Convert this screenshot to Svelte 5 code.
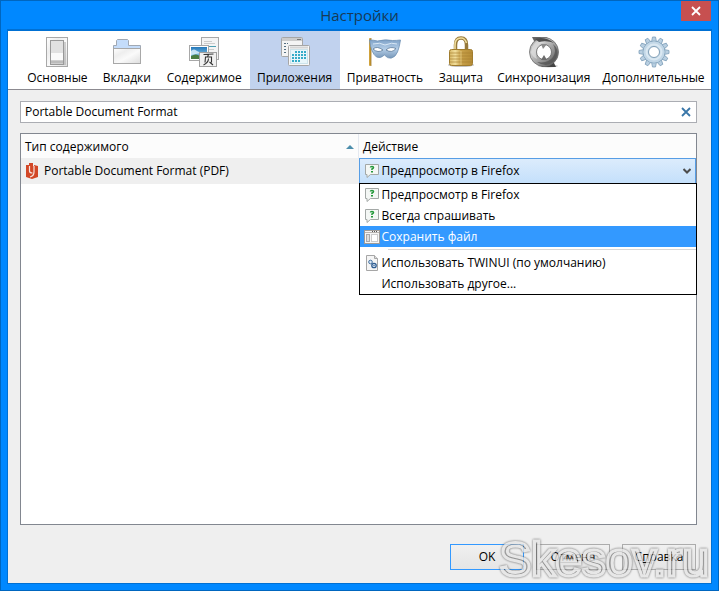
<script lang="ts">
  type Tab = { id: string; label: string };
  type Action = { id: string; label: string; icon: string };

  const tabs: Tab[] = [
    { id: 'general', label: 'Основные' },
    { id: 'tabs', label: 'Вкладки' },
    { id: 'content', label: 'Содержимое' },
    { id: 'apps', label: 'Приложения' },
    { id: 'privacy', label: 'Приватность' },
    { id: 'security', label: 'Защита' },
    { id: 'sync', label: 'Синхронизация' },
    { id: 'advanced', label: 'Дополнительные' }
  ];

  const actions: Action[] = [
    { id: 'preview', label: 'Предпросмотр в Firefox', icon: 'ask' },
    { id: 'ask', label: 'Всегда спрашивать', icon: 'ask' },
    { id: 'save', label: 'Сохранить файл', icon: 'save' },
    { id: 'twinui', label: 'Использовать TWINUI (по умолчанию)', icon: 'app' },
    { id: 'other', label: 'Использовать другое...', icon: '' }
  ];

  const teeth = Array.from({ length: 12 }, (_, i) => i * 30);

  let activeTab = $state('apps');
  let query = $state('Portable Document Format');
  let hovered = $state('save');
</script>

{#snippet actionIcon(name: string)}
  <svg class="action-icon" viewBox="0 0 16 16" aria-hidden="true">
    {#if name === 'ask'}
      <path d="M1.5 1.500h13v10h-8l-3.500 3v-3h-1.500z" fill="#f4f7f5" stroke="#a3a8a6" />
      <path d="M6.500 4.500q0-1 1.500-1t1.500 1q0 1-1.500 1.500v1" fill="none" stroke="#23983a" stroke-width="1.600" />
      <rect x="7" y="8" width="2" height="1.500" fill="#23983a" />
    {:else if name === 'save'}
      <rect x="0.500" y="1.500" width="15" height="13" fill="#f5f5f5" stroke="#a09c98" />
      <path d="M1 3.500h14" stroke="#b8b4b0" />
      <path d="M8 2.500h1M10 2.500h1M12 2.500h1" stroke="#555" />
      <rect x="2.500" y="5.500" width="3" height="7" fill="#ddd" stroke="#aaa" />
      <rect x="7.500" y="5.500" width="6" height="7" fill="#fff" stroke="#ccc" />
    {:else if name === 'app'}
      <path d="M2.500.5h8l3 3v12h-11z" fill="#f5f5f5" stroke="#a6a6a6" />
      <path d="M10.500.5v3h3" fill="#ddd" stroke="#a6a6a6" />
      <circle cx="6.500" cy="7" r="1.800" fill="#dce9f7" stroke="#42709f" />
      <circle cx="10" cy="10.500" r="2.200" fill="#dce9f7" stroke="#2f5d91" stroke-width="1.300" />
      <circle cx="10" cy="10.500" r=".7" fill="#2f5d91" />
    {/if}
  </svg>
{/snippet}

{#snippet tabIcon(id: string)}
  <svg class="tab-icon" viewBox="0 0 32 32" aria-hidden="true">
    {#if id === 'general'}
      <rect x="5.500" y="1.500" width="21" height="29" fill="url(#paper)" stroke="#a8a8a8" />
      <path d="M11 28h13V6" fill="none" stroke="#999" stroke-width="2" opacity=".45" />
      <rect x="9.500" y="4.500" width="13" height="24" fill="#e1e1e1" stroke="#999" />
      <rect x="10" y="17" width="12" height="7" fill="#fafafa" />
      <path d="M10 26h12" stroke="#bbb" stroke-width="3" />
    {:else if id === 'tabs'}
      <path d="M2.500 12V9.500h3v-5l1-1h10l1 1v5h12V12" fill="#c4dcfa" stroke="#a1a9b4" />
      <rect x="2.500" y="12.500" width="27" height="15" fill="url(#paper)" stroke="#a8a8a8" />
    {:else if id === 'content'}
      <rect x="13.500" y="1.500" width="17" height="22" fill="#f4f4f4" stroke="#a8a8a8" />
      <path d="M16 5.500h8M16 7.500h11M16 13.500h10" stroke="#ccc" />
      <path d="M16 10.500h12" stroke="#4f9fb2" />
      <rect x="1.500" y="9.500" width="19" height="15" fill="#fff" stroke="#a8a8a8" />
      <rect x="3" y="11" width="16" height="12" fill="url(#sky)" />
      <path d="M3 15q3-3 6 0l4 2-10 2z" fill="#e2f2fc" opacity=".8" />
      <path d="M3 20q5-3 9 0v3H3z" fill="#4a7b40" />
      <rect x="11.500" y="16.500" width="17" height="14" fill="#f1f1f1" stroke="#a0a0a0" />
      <path d="M15.500 18.500l10-.5M20.500 18.500l-1 2.500M17 26.500l.5-5.500h6v5.500M20.500 22.500q0 4-5 6.500M21.500 26l3.500 3" fill="none" stroke="#333" stroke-width="1.100" />
    {:else if id === 'apps'}
      <rect x="2.500" y="1.500" width="21" height="19" rx="1" fill="#f4f4f4" stroke="#a6a6a6" />
      <path d="M3 3.500h20" stroke="#ccc" stroke-width="3" />
      <path d="M18 3.500h4" stroke="#777" />
      <path d="M5 7.500h4M5 10.500h3M5 13.500h3M5 16.500h3" stroke="#557083" stroke-dasharray="2 1" />
      <rect x="9.500" y="9.500" width="21" height="20" rx="1" fill="#f8f8f8" stroke="#a6a6a6" />
      <path d="M11 11.500h18" stroke="#d5d5d5" stroke-width="2" />
      <rect x="11.500" y="13.500" width="17" height="14" fill="#e9f6fa" stroke="#cce3eb" />
      <path d="M16 16h12M13 19h15M13 22h15M13 25h9" stroke="#35acc8" stroke-width="2" stroke-dasharray="2 1" />
    {:else if id === 'privacy'}
      <rect x="0" y="2" width="2" height="28" rx="1" fill="#d0a23b" />
      <path d="M2 2v28" stroke="#8d6616" stroke-width=".7" />
      <path d="M.5 4q4 0 8 1 8-2 15-.5 4 0 8-.5-1 7-3 12-2 5-6 6-4 1-7-3-4 4-8 2Q2 17 .5 4z" fill="url(#mask)" stroke="#6f91b4" stroke-width=".8" />
      <path d="M4 13q4-3.500 10 1-5 3.500-10-1zM17 14q4-4 10-1.500-4 5-10 1.500z" fill="#fff" stroke="#5b7898" stroke-width=".8" />
      <path d="M4 8q7-2 12 1 7-3 12-1" fill="none" stroke="#e0edf8" stroke-width=".9" />
    {:else if id === 'security'}
      <ellipse cx="16" cy="29" rx="13" ry="2" fill="#888" opacity=".5" />
      <path d="M10.500 15V9q0-7 5.500-7t5.500 7v6" fill="none" stroke="#96783a" stroke-width="3.500" />
      <path d="M10 15V9q0-7 6-7 4 0 5.500 5" fill="none" stroke="#efdd9d" stroke-width="1.600" />
      <rect x="4.500" y="13.500" width="23" height="16" rx="2" fill="url(#brass)" stroke="#a07c2e" />
      <path d="M5 17h22M5 20h22M5 23h22M5 26h22" stroke="#a67f30" opacity=".65" />
      <path d="M16 15v14" stroke="#f3df9b" opacity=".6" />
    {:else if id === 'sync'}
      <ellipse cx="20" cy="30" rx="10" ry="1.500" fill="#777" opacity=".4" />
      <path d="M4 1h16L8 9z" fill="#666" />
      <path d="M28 31H13l11-8z" fill="#444" />
      <circle cx="16" cy="16" r="14.500" fill="url(#steel)" stroke="#6b6b6b" stroke-width=".8" />
      <path d="M3 16q1-11 12-13 6 0 10 4-10-3-15 3-4 6-1 13-5-2-6-7z" fill="#dedede" opacity=".7" />
      <path d="M7 3q10-3 19 4-8-3-15-1z" fill="#4f4f4f" />
      <path d="M9 26q11 2 16-5 4-6 0-13 6 5 4 12-3 8-11 9-5 0-9-3z" fill="#555" opacity=".8" />
      <circle cx="16" cy="16" r="7.500" fill="#fff" stroke="#666" stroke-width=".8" />
      <path d="M13 8h6l-4 5z" fill="#8b8b8b" />
      <path d="M13 24h6l-3-5z" fill="#6b6b6b" />
    {:else}
      <g fill="#b9cfe1" stroke="#7f9fb9" stroke-width=".8">
        {#each teeth as angle}
          <path d="M13.500 6l1-5h3l1 5z" transform="rotate({angle} 16 16)" />
        {/each}
        <circle cx="16" cy="16" r="11" />
      </g>
      <circle cx="16" cy="16" r="10.500" fill="#c2d7e7" />
      <circle cx="16" cy="16" r="7.500" fill="none" stroke="#dae8f2" stroke-width="2" />
      <circle cx="16" cy="16" r="5.500" fill="#fff" stroke="#809fb7" />
    {/if}
  </svg>
{/snippet}

<svg class="defs" aria-hidden="true">
  <defs>
    <linearGradient id="paper" x2="1" y2="1"><stop stop-color="#fff" /><stop offset=".3" stop-color="#eee" /><stop offset=".55" stop-color="#fafafa" /><stop offset="1" stop-color="#ddd" /></linearGradient>
    <linearGradient id="sky" x2="0" y2="1"><stop stop-color="#2478ba" /><stop offset="1" stop-color="#a6daef" /></linearGradient>
    <linearGradient id="mask" x2="0" y2="1"><stop stop-color="#7fa2c8" /><stop offset=".5" stop-color="#b3cde7" /><stop offset="1" stop-color="#7797b8" /></linearGradient>
    <linearGradient id="brass"><stop stop-color="#d7b865" /><stop offset=".25" stop-color="#f2df9c" /><stop offset=".5" stop-color="#c8a14a" /><stop offset="1" stop-color="#b58c36" /></linearGradient>
    <linearGradient id="steel" x2="1" y2="1"><stop stop-color="#999" /><stop offset=".3" stop-color="#ccc" /><stop offset=".6" stop-color="#999" /><stop offset="1" stop-color="#444" /></linearGradient>
  </defs>
</svg>

<div class="window">
  <header class="titlebar">
    <h1>Настройки</h1>
    <button class="close" aria-label="Закрыть">
      <svg width="10" height="10" viewBox="0 0 10 10"><path d="M1 1l8 8M9 1l-8 8" stroke="#fff" stroke-width="1.800" /></svg>
    </button>
  </header>

  <main class="client">
    <nav class="toolbar">
      {#each tabs as tab}
        <button class="tab" class:active={activeTab === tab.id} onclick={() => (activeTab = tab.id)}>
          {@render tabIcon(tab.id)}
          <span>{tab.label}</span>
        </button>
      {/each}
    </nav>

    <div class="pane">
      <div class="search">
        <input type="text" aria-label="Поиск" bind:value={query} />
        <button class="clear" aria-label="Очистить" onclick={() => (query = '')}>
          <svg width="10" height="10" viewBox="0 0 10 10"><path d="M1 1l8 8M9 1l-8 8" stroke="#3976a8" stroke-width="1.800" /></svg>
        </button>
      </div>

      <div class="list">
        <table>
          <thead>
            <tr>
              <th class="type">
                <div class="heading">
                  Тип содержимого
                  <svg width="8" height="4" viewBox="0 0 8 4" aria-hidden="true"><path d="M0 4l4-4 4 4z" fill="#4d8eac" /></svg>
                </div>
              </th>
              <th>Действие</th>
            </tr>
          </thead>
          <tbody>
            <tr>
              <td>
                <div class="file-type">
                  <svg width="12" height="16" viewBox="0 0 12 16" aria-hidden="true">
                    <path d="M0 2h3V0h4v3h1V2l4 1v11l-6 2-6-2z" fill="#d24726" />
                    <path d="M3.500 3v5q0 2 3 2M8 3v6q0 4-4 5" fill="none" stroke="#f7e3dd" stroke-width="1.200" />
                  </svg>
                  Portable Document Format (PDF)
                </div>
              </td>
              <td>
                <div class="picker">
                  <div class="picker-face">
                    {@render actionIcon('ask')}
                    <select aria-label="Действие">
                      {#each actions as action}
                        <option value={action.id}>{action.label}</option>
                      {/each}
                    </select>
                    <svg width="8" height="6" viewBox="0 0 8 6" aria-hidden="true"><path d="M.5 1L4 4.500 7.500 1" fill="none" stroke="#4c4c4c" stroke-width="2" /></svg>
                  </div>
                  <ul class="menu">
                    {#each actions as action}
                      <li class:separated={action.id === 'twinui'}>
                        <button class="item" class:hovered={hovered === action.id} onmouseenter={() => (hovered = action.id)}>
                          {@render actionIcon(action.icon)}
                          {action.label}
                        </button>
                      </li>
                    {/each}
                  </ul>
                </div>
              </td>
            </tr>
          </tbody>
        </table>
      </div>

      <footer class="buttons">
        <button class="default">OK</button>
        <button>Отмена</button>
        <button>С<u>п</u>равка</button>
      </footer>
    </div>
  </main>

  <div class="watermark">Skesov.ru</div>
</div>

<style>
  :global(body) {
    margin: 0;
  }

  .defs {
    position: absolute;
    width: 0;
    height: 0;
  }

  .window {
    position: relative;
    display: flex;
    flex-direction: column;
    box-sizing: border-box;
    min-height: 100vh;
    padding: 0 7px 7px;
    border: 1px solid #0066bf;
    background: #0088ff;
    color: #000;
    font: 12px/16px 'Open Sans', 'Noto Sans', sans-serif;
  }

  button,
  input,
  select {
    font: inherit;
    color: inherit;
  }

  button {
    padding: 0;
    border: 0;
    background: none;
  }

  .titlebar {
    display: grid;
    grid-template-columns: 30px 1fr 30px;
    height: 29px;
  }

  h1 {
    grid-column: 2;
    margin: 0;
    color: #173a57;
    font-size: 15px;
    font-weight: 400;
    line-height: 29px;
    text-align: center;
  }

  .close {
    display: grid;
    place-items: center;
    height: 20px;
    background: #c75050;
  }

  .client {
    flex: 1;
    display: flex;
    flex-direction: column;
    outline: 1px solid #0070d3;
    border-top: 1px solid #0070d3;
    background: #efefef;
  }

  .toolbar {
    display: grid;
    grid-template-columns: 75fr 64fr 91fr 90fr 91fr 61fr 105fr 115fr;
    height: 58px;
    padding-left: 12px;
    border-bottom: 1px solid #8c8a90;
    background: #fff;
  }

  .tab {
    display: flex;
    flex-direction: column;
    align-items: center;
    gap: 2px;
    min-width: 0;
    padding-top: 5px;
    white-space: nowrap;
  }

  .tab.active {
    background: #c1d2ee;
  }

  .tab-icon {
    flex: none;
    width: 32px;
    height: 32px;
  }

  .pane {
    flex: 1;
    display: flex;
    flex-direction: column;
    padding: 11px 14px 13px 12px;
  }

  .search {
    display: flex;
    align-items: center;
    height: 20px;
    border: 1px solid #abadb3;
    background: #fff;
  }

  .search input {
    flex: 1;
    min-width: 0;
    padding: 0 4px;
    border: 0;
    outline: 0;
    background: none;
  }

  .clear {
    display: grid;
    place-items: center;
    width: 20px;
    height: 20px;
  }

  .list {
    flex: 1;
    margin-top: 10px;
    border: 1px solid #828790;
    background: #fff;
  }

  table {
    width: 100%;
    border-collapse: collapse;
    table-layout: fixed;
  }

  th {
    box-sizing: border-box;
    height: 24px;
    padding: 2px 4px 0;
    background: #fcfcfc;
    font-weight: 400;
    text-align: left;
  }

  th.type {
    width: 50%;
    border-right: 1px solid #e5e9f0;
  }

  .heading {
    display: flex;
    align-items: center;
    justify-content: space-between;
  }

  td {
    padding: 0;
    background: #efefef;
  }

  .file-type {
    display: flex;
    align-items: center;
    gap: 6px;
    padding-left: 5px;
  }

  .picker {
    position: relative;
  }

  .picker-face {
    display: flex;
    align-items: center;
    height: 24px;
    padding: 0 4px;
    border: 1px solid #569de5;
    background: linear-gradient(#dcecfc, #c4e0fb);
  }

  .picker-face select {
    flex: 1;
    min-width: 0;
    padding: 0 2px;
    border: 0;
    outline: 0;
    appearance: none;
    background: none;
  }

  .action-icon {
    flex: none;
    width: 16px;
    height: 16px;
  }

  .menu {
    position: absolute;
    top: 25px;
    left: 0;
    right: -1px;
    margin: 0;
    padding: 0;
    border: 1px solid #000;
    background: #fff;
    list-style: none;
  }

  .separated::before {
    content: '';
    display: block;
    height: 1px;
    margin: 2px 0 2px 28px;
    background: #d7d7d7;
  }

  .item {
    display: flex;
    align-items: center;
    gap: 2px;
    width: 100%;
    height: 21px;
    padding-left: 4px;
    white-space: nowrap;
  }

  .item.hovered {
    background: #3399ff;
    color: #fff;
  }

  .buttons {
    display: flex;
    justify-content: flex-end;
    gap: 12px;
    margin-top: 19px;
    padding-right: 1px;
  }

  .buttons button {
    width: 74px;
    height: 26px;
    border: 1px solid #acacac;
    background: linear-gradient(#f0f0f0, #e5e5e5);
  }

  .buttons .default {
    border-color: #3399ff;
  }

  .watermark {
    position: absolute;
    right: 9px;
    bottom: 0;
    color: transparent;
    font: 48px/60px 'Liberation Sans', sans-serif;
    -webkit-text-stroke: 3px #e6e6e6;
    filter: drop-shadow(0 0 1px #444);
    opacity: 0.8;
    pointer-events: none;
  }
</style>
